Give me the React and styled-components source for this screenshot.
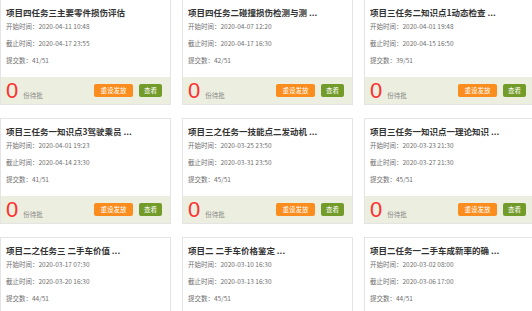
import styled, { createGlobalStyle } from 'styled-components';

const GlobalStyle = createGlobalStyle`
  html, body {
    margin: 0;
    padding: 0;
    background: #ffffff;
    overflow: hidden;
  }
  body {
    font-family: "Noto Sans CJK SC", "Liberation Sans", sans-serif;
  }
`;

const tasks = [
  { title: '项目四任务三主要零件损伤评估', start: '2020-04-11 10:48', end: '2020-04-17 23:55', count: '41/51' },
  { title: '项目四任务二碰撞损伤检测与测 ...', start: '2020-04-07 12:20', end: '2020-04-17 16:30', count: '42/51' },
  { title: '项目三任务二知识点1动态检查 ...', start: '2020-04-01 19:48', end: '2020-04-15 16:50', count: '39/51' },
  { title: '项目三任务一知识点3驾驶乘员 ...', start: '2020-04-01 19:23', end: '2020-04-14 23:30', count: '41/51' },
  { title: '项目三之任务一技能点二发动机 ...', start: '2020-03-25 23:50', end: '2020-03-31 23:50', count: '45/51' },
  { title: '项目三任务一知识点一理论知识 ...', start: '2020-03-23 21:30', end: '2020-03-27 21:30', count: '45/51' },
  { title: '项目二之任务三 二手车价值 ...', start: '2020-03-17 07:30', end: '2020-03-20 16:30', count: '44/51' },
  { title: '项目二 二手车价格鉴定 ...', start: '2020-03-10 16:30', end: '2020-03-13 16:30', count: '45/51' },
  { title: '项目二任务一二手车成新率的确 ...', start: '2020-03-02 08:00', end: '2020-03-06 17:00', count: '44/51' },
];

const Viewport = styled.div`
  width: 532px;
  height: 311px;
  overflow: hidden;
`;

const Grid = styled.div`
  display: grid;
  grid-template-columns: repeat(3, 171px);
  column-gap: 11px;
  row-gap: 13px;
  margin-top: -1px;
  width: 600px;
`;

const Card = styled.div`
  border: 1px solid #e4e4e4;
  background: #ffffff;
  display: flex;
  flex-direction: column;
`;

const Body = styled.div`
  height: 77px;
  box-sizing: border-box;
  padding: 6px 5px 0;
`;

const Title = styled.div`
  font-size: 8.5px;
  line-height: 12px;
  font-weight: 700;
  color: #333333;
  white-space: nowrap;
  overflow: hidden;
`;

const Info = styled.div`
  font-size: 6.5px;
  line-height: 17px;
  color: #707070;
  white-space: nowrap;
`;

const Footer = styled.div`
  height: 27px;
  background: #ecefdf;
  display: flex;
  align-items: center;
  padding: 0 8px 0 5px;
`;

const Count = styled.span`
  font-family: "Liberation Sans", sans-serif;
  font-size: 22px;
  line-height: 22px;
  color: #ff2f2f;
`;

const Pending = styled.span`
  font-size: 6.5px;
  color: #888888;
  margin: 8px 0 0 5px;
`;

const Button = styled.button`
  border: none;
  border-radius: 2px;
  height: 13px;
  padding: 0;
  width: ${(p) => (p.$wide ? '39px' : '23px')};
  margin-left: ${(p) => (p.$wide ? 'auto' : '6px')};
  background: ${(p) => (p.$green ? '#729b2a' : '#fb8d1e')};
  color: #ffffff;
  font-family: "Noto Sans CJK SC", sans-serif;
  font-size: 6.5px;
  line-height: 13px;
  cursor: pointer;
`;

const TaskCard = ({ task }) => (
  <Card>
    <Body>
      <Title>{task.title}</Title>
      <Info>开始时间：{task.start}</Info>
      <Info>截止时间：{task.end}</Info>
      <Info>提交数：{task.count}</Info>
    </Body>
    <Footer>
      <Count>0</Count>
      <Pending>份待批</Pending>
      <Button $wide>重设发放</Button>
      <Button $green>查看</Button>
    </Footer>
  </Card>
);

const App = () => (
  <Viewport>
    <GlobalStyle />
    <Grid>
      {tasks.map((t) => (
        <TaskCard key={t.title} task={t} />
      ))}
    </Grid>
  </Viewport>
);

export default App;
